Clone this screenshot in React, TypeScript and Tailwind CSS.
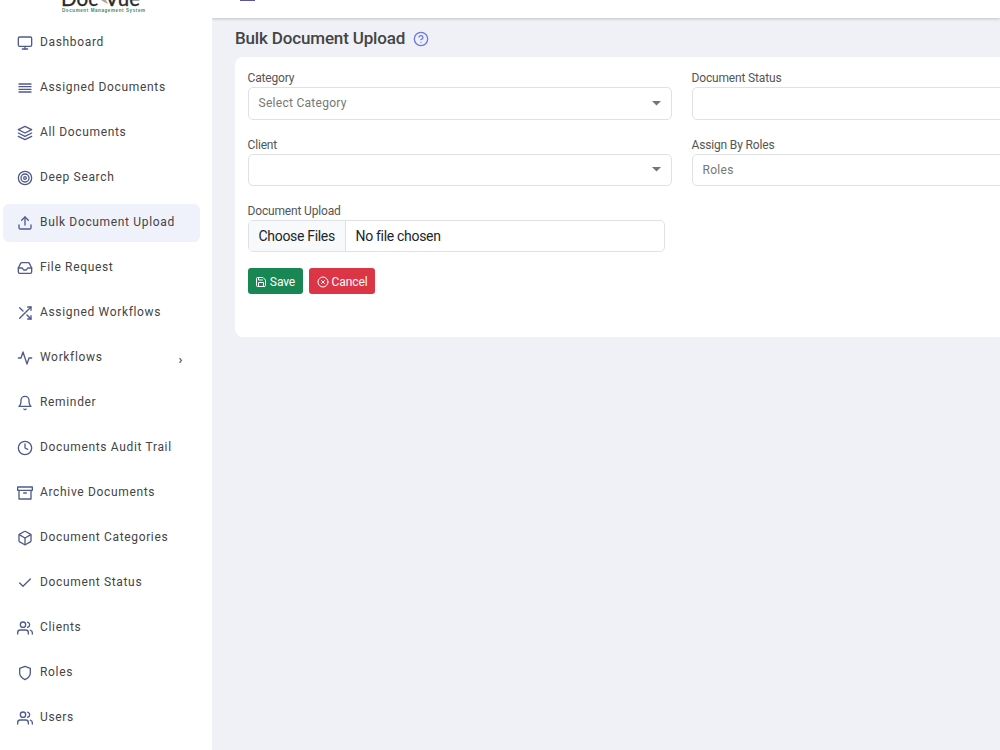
import type { ReactNode } from "react";
import type { IconType } from "react-icons";
import {
	FiActivity,
	FiAlignJustify,
	FiArchive,
	FiBell,
	FiBox,
	FiCheck,
	FiClock,
	FiHelpCircle,
	FiInbox,
	FiLayers,
	FiMonitor,
	FiSave,
	FiShield,
	FiShuffle,
	FiTarget,
	FiUpload,
	FiUsers,
	FiXCircle,
} from "react-icons/fi";

type MenuItem = {
	label: string;
	icon: IconType;
	active?: boolean;
	hasChildren?: boolean;
};

const menu: MenuItem[] = [
	{ label: "Dashboard", icon: FiMonitor },
	{ label: "Assigned Documents", icon: FiAlignJustify },
	{ label: "All Documents", icon: FiLayers },
	{ label: "Deep Search", icon: FiTarget },
	{ label: "Bulk Document Upload", icon: FiUpload, active: true },
	{ label: "File Request", icon: FiInbox },
	{ label: "Assigned Workflows", icon: FiShuffle },
	{ label: "Workflows", icon: FiActivity, hasChildren: true },
	{ label: "Reminder", icon: FiBell },
	{ label: "Documents Audit Trail", icon: FiClock },
	{ label: "Archive Documents", icon: FiArchive },
	{ label: "Document Categories", icon: FiBox },
	{ label: "Document Status", icon: FiCheck },
	{ label: "Clients", icon: FiUsers },
	{ label: "Roles", icon: FiShield },
	{ label: "Users", icon: FiUsers },
];

function Logo() {
	return (
		<div className="h-[19px] shrink-0 overflow-hidden pl-[61px]">
			<svg width="90" height="14" viewBox="0 0 90 14">
				<g fontFamily="Lato, sans-serif" fontSize="21" fill="#2b2b2b" stroke="#2b2b2b" strokeWidth="0.3">
					<text x="0" y="6" textLength="37" lengthAdjust="spacingAndGlyphs">
						Doc
					</text>
					<text x="44" y="6" textLength="35" lengthAdjust="spacingAndGlyphs">
						Vue
					</text>
				</g>
				<path d="M40 0h5l2 4-4-2z" fill="#b9a09a" />
				<text x="1" y="11.500" fontFamily="Liberation Sans, sans-serif" fontWeight="700" fontSize="4.500" fill="#3c8a68" textLength="83">
					Document Management System
				</text>
			</svg>
		</div>
	);
}

function SidebarItem({ item }: { item: MenuItem }) {
	const Icon = item.icon;

	return (
		<li
			className={`flex h-[38px] items-center rounded-md pl-[14px] pr-[17px] ${item.active ? "bg-[#eff1fb]" : ""}`}
		>
			<Icon size={16} className="shrink-0 text-[#505b8c]" />
			<span className="mb-px ml-[7px] grow whitespace-nowrap text-[12px] leading-5 tracking-[0.66px] text-[#444]">
				{item.label}
			</span>
			{item.hasChildren && <span className="mt-1 text-[13px] font-medium leading-4 text-[#444]">›</span>}
		</li>
	);
}

function Field({ label, children }: { label: string; children: ReactNode }) {
	return (
		<div>
			<label className="block h-[17px] text-[12px] leading-[17px] tracking-[-0.16px] text-[#555]">{label}</label>
			{children}
		</div>
	);
}

function SelectBox({ placeholder }: { placeholder?: string }) {
	return (
		<div className="flex h-[32.5px] items-center justify-between rounded-[5px] border border-[#e0e1e4] bg-white px-[10px] text-[12px] tracking-[0.28px] text-[#777]">
			<span>{placeholder}</span>
			<svg width="9" height="5" viewBox="0 0 9 5" fill="#757575">
				<path d="M0 0h9L4.500 4.500z" />
			</svg>
		</div>
	);
}

export default function App() {
	return (
		<div className="flex h-[750px] w-[1000px] overflow-hidden bg-[#f0f1f7] font-[Roboto,sans-serif]">
			<aside className="flex w-[211.5px] shrink-0 flex-col bg-white">
				<Logo />
				<ul className="flex flex-col gap-[7px] pl-[3px] pr-3 pt-[4.500px]">
					{menu.map((item) => (
						<SidebarItem key={item.label} item={item} />
					))}
				</ul>
			</aside>

			<main className="min-w-0 grow overflow-hidden">
				<header className="h-[18px] bg-white pl-7 shadow-[0_1px_3px_rgba(0,0,0,0.2)]">
					<div className="h-px w-[15px] bg-[#5b559c]" />
				</header>

				<div className="flex h-[39px] items-center gap-2 pl-[23.5px]">
					<h1 className="text-[17px] font-medium leading-5 tracking-[-0.16px] text-[#444]">Bulk Document Upload</h1>
					<FiHelpCircle size={16} className="mt-[3px] text-[#6c79e0]" />
				</div>

				<section className="ml-[23.5px] h-[280px] w-[925px] rounded-lg bg-white px-[12.5px] pt-[13px]">
					<div className="grid grid-cols-[424px_424px] gap-x-5 gap-y-[17px]">
						<Field label="Category">
							<SelectBox placeholder="Select Category" />
						</Field>
						<Field label="Document Status">
							<SelectBox />
						</Field>
						<Field label="Client">
							<SelectBox />
						</Field>
						<Field label="Assign By Roles">
							<SelectBox placeholder="Roles" />
						</Field>
						<Field label="Document Upload">
							<div className="flex h-8 w-[417.5px] overflow-hidden rounded-[5px] border border-[#dee2e6] text-[14px] leading-[30px] tracking-[-0.31px] text-[#212529]">
								<span className="w-[97.5px] whitespace-nowrap border-r border-[#dee2e6] bg-[#f8f9fa] pl-[10px]">Choose Files</span>
								<span className="pl-[9.5px]">No file chosen</span>
							</div>
						</Field>
					</div>

					<div className="mt-4 flex gap-[6.5px] text-[12px] tracking-[-0.1px] text-white">
						<button className="flex h-[26px] w-[55px] items-center justify-center gap-[3px] rounded-[3px] bg-[#198754]">
							<FiSave size={12} className="mt-0.5" />
							<span className="mt-px">Save</span>
						</button>
						<button className="flex h-[26px] w-[66px] items-center justify-center gap-[3px] rounded-[3px] bg-[#dc3545]">
							<FiXCircle size={12} className="mt-0.5" />
							<span className="mt-px">Cancel</span>
						</button>
					</div>
				</section>
			</main>
		</div>
	);
}
